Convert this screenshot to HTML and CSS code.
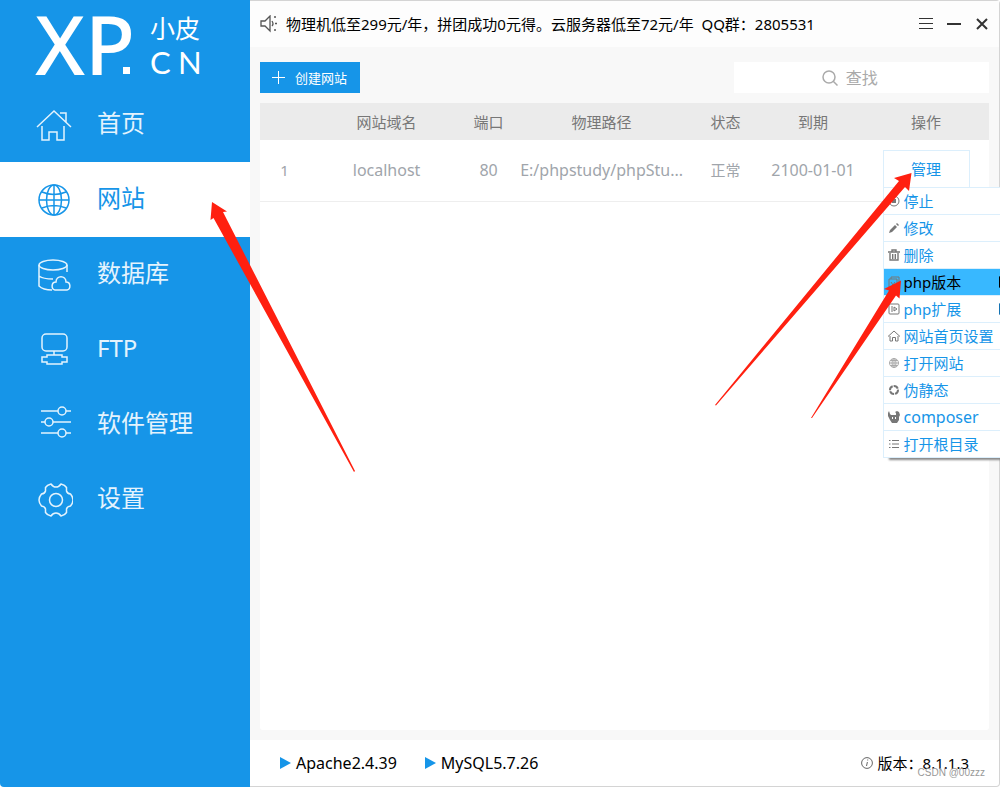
FILE: index.html
```html
<!DOCTYPE html>
<html lang="zh-CN">
<head>
<meta charset="utf-8">
<title>小皮 XP.CN</title>
<link rel="stylesheet" href="styles.css">
</head>
<body>
<div class="app">
  <aside class="sidebar">
    <svg class="logo" viewBox="0 0 250 87" role="img" aria-label="XP.CN 小皮">
      <text class="logo-main" x="35" y="75">XP</text>
      <rect x="123" y="67" width="7" height="7"/>
      <text class="logo-cn" x="150" y="38">小皮</text>
      <text class="logo-latin" x="150 178" y="74">CN</text>
    </svg>
    <nav class="nav">
      <a class="nav-item" href="#home">
        <svg class="nav-icon" viewBox="0 0 38 38"><path d="M2 21 19 5 36 21M7 20v14h7v-8h8v8h7V20M25 7h6v9"/></svg>
        <span>首页</span>
      </a>
      <a class="nav-item active" href="#sites" aria-current="page">
        <svg class="nav-icon" viewBox="0 0 38 38"><circle cx="19" cy="19" r="15"/><ellipse cx="19" cy="19" rx="7.500" ry="15"/><path d="M19 4v30M4 19h30M7 11q12 5 24 0M7 27q12-5 24 0"/></svg>
        <span>网站</span>
      </a>
      <a class="nav-item" href="#db">
        <svg class="nav-icon" viewBox="0 0 38 38"><ellipse cx="18" cy="9" rx="14" ry="5"/><path d="M4 9v21c3 3 8 4 13 4M32 9v7M4 20c4 3 9 3 14 3M20 34c-4-1-4-8 1-8 0-7 10-7 10 0 5 0 5 7 1 8z"/></svg>
        <span>数据库</span>
      </a>
      <a class="nav-item" href="#ftp">
        <svg class="nav-icon" viewBox="0 0 38 38"><rect x="7" y="3" width="25" height="17" rx="4"/><path d="M19 20v4M12 24h15v2h5v5h-5v2H12v-2H7v-5h5z"/></svg>
        <span>FTP</span>
      </a>
      <a class="nav-item" href="#software">
        <svg class="nav-icon" viewBox="0 0 38 38"><path d="M6 5h17M31 5h5M6 16h4M18 16h18M6 27h17M31 27h5"/><circle cx="27" cy="5" r="4"/><circle cx="14" cy="16" r="4"/><circle cx="27" cy="27" r="4"/></svg>
        <span>软件管理</span>
      </a>
      <a class="nav-item" href="#settings">
        <svg class="nav-icon" viewBox="0 0 38 38"><circle cx="21" cy="19" r="6.500"/><path d="M16 3Q12 4 10.500 6.500V10Q10 12.500 6.500 13Q4 16 4 19Q4 22 6.500 25Q10 25.500 10.500 28V31.500Q12 34 16 35Q18 32 21 32Q24 32 26 35Q30 34 31.500 31.500V28Q32 25.500 35.500 25Q38 22 38 19Q38 16 35.500 13Q32 12.500 31.500 10V6.500Q30 4 26 3Q24 6 21 6Q18 6 16 3Z"/></svg>
        <span>设置</span>
      </a>
    </nav>
  </aside>

  <div class="main">
    <header class="topbar">
      <svg class="speaker" viewBox="0 0 17 18"><path d="M1 6h4l5-5v15l-5-5H1z"/><path d="M12 6q2 3 0 5"/><path d="M14 2h2M15 8.500h2M14 15h2"/></svg>
      <p class="notice">物理机低至299元/年，拼团成功0元得。云服务器低至72元/年&nbsp; QQ群：2805531</p>
      <div class="window-controls">
        <button type="button" aria-label="菜单"><svg viewBox="0 0 14 14"><path class="thin" d="M0 1.500h14M0 6.500h14M0 11.500h14"/></svg></button>
        <button type="button" aria-label="最小化"><svg viewBox="0 0 14 14"><path d="M0 7h14"/></svg></button>
        <button type="button" aria-label="关闭"><svg viewBox="0 0 14 14"><path d="M2 2l10 10M12 2 2 12"/></svg></button>
      </div>
    </header>

    <main class="content">
      <div class="toolbar">
        <button class="create" type="button">
          <svg viewBox="0 0 13 13"><path d="M6.500 0v13M0 6.500h13"/></svg>
          <span>创建网站</span>
        </button>
        <label class="search">
          <svg viewBox="0 0 16 16"><circle cx="7" cy="7" r="6"/><path d="m11 11 4.500 4.500"/></svg>
          <input type="search" placeholder="查找" aria-label="查找">
        </label>
      </div>
      <div class="panel">
        <table class="sites">
          <colgroup><col class="c-7"><col class="c-21"><col class="c-7"><col class="c-24"><col class="c-10"><col class="c-14"><col class="c-17"></colgroup>
          <thead>
            <tr><th></th><th>网站域名</th><th>端口</th><th>物理路径</th><th>状态</th><th>到期</th><th>操作</th></tr>
          </thead>
          <tbody>
            <tr>
              <td>1</td><td class="latin">localhost</td><td class="latin">80</td><td class="latin">E:/phpstudy/phpStu...</td><td>正常</td><td class="latin">2100-01-01</td>
              <td>
                <div class="manage">
                  <button class="manage-button" type="button" aria-expanded="true">管理</button>
                  <ul class="menu">
                    <li><button type="button"><svg viewBox="0 0 12 12"><circle cx="6" cy="6" r="5"/><path class="solid" d="M4 4h4v4H4z"/></svg>停止</button></li>
                    <li><button type="button"><svg viewBox="0 0 12 12"><path class="solid" d="m1 11 1-3 5-5 2 2-5 5zM8 2l1-1 2 2-1 1z"/></svg>修改</button></li>
                    <li><button type="button"><svg viewBox="0 0 12 12"><path class="bold" d="M0 3h12M4 3V1h4v2M2 4v7h8V4M4.700 5v5M7.300 5v5"/></svg>删除</button></li>
                    <li><button class="selected" type="button"><svg viewBox="0 0 12 12"><path d="M1 3h8v8H1zM3 3V1h8v8H9M3 6l2 3 2-3"/></svg>php版本<svg class="more" viewBox="0 0 8 12"><path class="solid" d="M0 0l8 6-8 6z"/></svg></button></li>
                    <li><button type="button"><svg viewBox="0 0 12 12"><rect x="1" y="1" width="10" height="10" rx="1"/><path d="M4 3v6M6 4v4l3-2z"/></svg>php扩展<svg class="more" viewBox="0 0 8 12"><path class="solid" d="M0 0l8 6-8 6z"/></svg></button></li>
                    <li><button type="button"><svg viewBox="0 0 12 12"><path d="M0 6.500 6 1l6 5.500M2 6v5h2.500V7.500h3V11H10V6"/></svg>网站首页设置</button></li>
                    <li><button type="button"><svg class="pale" viewBox="0 0 12 12"><circle cx="6" cy="6" r="4.500"/><ellipse cx="6" cy="6" rx="2" ry="4.500"/><path d="M6 1.500v9M1.500 6h9M2.500 3.500h7M2.500 8.500h7"/></svg>打开网站</button></li>
                    <li><button type="button"><svg viewBox="0 0 12 12"><circle class="ring" cx="6" cy="6" r="4"/></svg>伪静态</button></li>
                    <li><button class="latin" type="button"><svg viewBox="0 0 12 12"><path class="solid" d="M1 0l1 3 1 1h5V2L7 1l2-1 2 1 1 3-1 2v3l-2 3H4L2 9 0 5V2z"/><path class="eye" d="M4.500 6v2M7.500 6v2"/></svg>composer</button></li>
                    <li><button type="button"><svg viewBox="0 0 12 12"><path d="M1 2.500h1.500M4 2.500h7M1 6h1.500M4 6h7M1 9.500h1.500M4 9.500h7"/></svg>打开根目录</button></li>
                  </ul>
                </div>
              </td>
            </tr>
          </tbody>
        </table>
      </div>
    </main>

    <footer class="statusbar">
      <span class="service latin"><svg viewBox="0 0 11 12"><path d="M0 0l11 6-11 6z"/></svg>Apache2.4.39</span>
      <span class="service latin"><svg viewBox="0 0 11 12"><path d="M0 0l11 6-11 6z"/></svg>MySQL5.7.26</span>
      <span class="version"><svg viewBox="0 0 12 12"><circle cx="6" cy="6" r="5.400"/><path d="M6.700 2.500v1M6.400 5 5.500 9"/></svg>版本：8.1.1.3</span>
    </footer>
  </div>

  <svg class="arrows" viewBox="0 0 1000 787" aria-hidden="true">
    <path d="M212 202 227 211.500 223 212 355 471 354 472 213.500 218 210.500 220z"/>
    <path d="M911.500 173 909 191 905 187 716 405.500 715 405 899 181 894 178z"/>
    <path d="M901 280.500 899.500 298.500 896 295.500 812 418 811 418 889 290.500 884 289z"/>
  </svg>
  <div class="watermark">CSDN @00zzz</div>
</div>
</body>
</html>
```
FILE: styles.css
```css
* { box-sizing: border-box; }

body {
  margin: 0;
  overflow: hidden;
  font: 15px/20px "Noto Sans", "Noto Sans CJK SC", sans-serif;
  color: #000;
}

button, input { font: inherit; }

button {
  padding: 0;
  border: 0;
  background: none;
  cursor: pointer;
}

svg {
  flex: none;
  fill: none;
  stroke: currentColor;
}

.latin { font-size: 16px; }

.app {
  position: relative;
  display: flex;
  min-height: 100vh;
  background: #fff;
}

/* Sidebar */
.sidebar {
  flex: none;
  width: 250px;
  background: #1695e8;
  border-bottom-left-radius: 4px;
  color: #fff;
}

.logo {
  display: block;
  width: 250px;
  height: 87px;
  fill: #fff;
  stroke: none;
}

.logo-main { font-size: 82px; font-weight: 500; }
.logo-cn { font-size: 25px; }
.logo-latin { font: 31px Lato, sans-serif; }

.nav-item {
  display: flex;
  align-items: center;
  gap: 24px;
  height: 75px;
  padding-left: 35px;
  color: #e4f3fd;
  font-size: 24px;
  line-height: 32px;
  text-decoration: none;
}

.nav-item span { padding-bottom: 3px; }
.nav-item.active { background: #fff; color: #1695e8; }
.nav-icon { width: 38px; height: 38px; stroke-width: 1.5; }

/* Main window */
.main {
  flex: 1;
  min-width: 0;
  display: flex;
  flex-direction: column;
  border: 1px solid #d4d4d4;
  border-left: 0;
  border-radius: 0 4px 4px 0;
  background: #f8f8f8;
}

.topbar {
  display: flex;
  align-items: center;
  gap: 9px;
  height: 46px;
  padding: 0 10px;
  background: #fdfdfd;
}

.speaker { width: 17px; height: 18px; color: #555; stroke-width: 1.3; }
.notice { flex: 1; margin: 0; white-space: nowrap; }
.window-controls { display: flex; gap: 14px; color: #333; }
.window-controls button { display: block; height: 14px; color: inherit; }
.window-controls svg { display: block; width: 14px; height: 14px; stroke-width: 2; }
.window-controls .thin { stroke-width: 1; }

.content {
  flex: 1;
  display: flex;
  flex-direction: column;
  gap: 10px;
  padding: 15px 10px 10px;
}

.toolbar { display: flex; justify-content: space-between; }

.create {
  display: flex;
  align-items: center;
  gap: 10px;
  width: 100px;
  height: 31px;
  padding-left: 12px;
  background: #1695e8;
  color: #fff;
  font-size: 13px;
}

.create svg { width: 13px; height: 13px; }

.search {
  display: flex;
  align-items: center;
  gap: 8px;
  width: 35%;
  height: 31px;
  padding-left: 88px;
  background: #fff;
  color: #aaa;
  font-size: 16px;
}

.search svg { width: 16px; height: 16px; stroke-width: 1.5; }

.search input {
  flex: 1;
  min-width: 0;
  padding: 0;
  border: 0;
  outline: 0;
  background: none;
}

.search input::placeholder { color: #aaa; }

.panel { flex: 1; background: #fff; border-radius: 0 0 3px 3px; }

.sites {
  width: 100%;
  table-layout: fixed;
  border-collapse: collapse;
  text-align: center;
  white-space: nowrap;
}

.c-7 { width: 7%; }
.c-10 { width: 10%; }
.c-14 { width: 14%; }
.c-17 { width: 17%; }
.c-21 { width: 21%; }
.c-24 { width: 24%; }

.sites th {
  height: 37px;
  padding: 0 2px 0 0;
  background: #ebebeb;
  color: #777;
  font-weight: 400;
}

.sites td {
  height: 61px;
  padding: 0 2px 0 0;
  border-bottom: 1px solid #eee;
  color: #a0a5ab;
}

.manage {
  position: relative;
  width: 87px;
  margin: 0 auto 3px;
}

.manage-button {
  width: 87px;
  height: 38px;
  border: 1px solid #dceffc;
  background: #fff;
  color: #1695e8;
}

.menu {
  position: absolute;
  top: 37px;
  left: 0;
  width: 128px;
  margin: 0;
  padding: 0;
  list-style: none;
  border: 1px solid #dceffc;
  background: #fff;
  box-shadow: 5px 3px 2px -1px #888;
}

.menu li + li { border-top: 1px solid #dceffc; }

.menu button {
  display: flex;
  align-items: center;
  gap: 4px;
  width: 100%;
  height: 26px;
  padding: 0 3px 0 4px;
  color: #1695e8;
}

.menu svg { width: 12px; height: 12px; color: #777; }
.menu .solid { fill: currentColor; stroke: none; }
.menu .bold { stroke-width: 1.4; }
.menu .pale { color: #aaa; }
.menu .ring { stroke-width: 2; stroke-dasharray: 5 1; }
.menu .eye { stroke: #fff; }
.menu .more { width: 8px; margin-left: auto; color: #1473b3; }
.menu .selected { background: #38b8ff; color: #000; }
.menu .selected .more { color: #000; }

/* Status bar */
.statusbar {
  display: flex;
  align-items: center;
  gap: 28px;
  height: 46px;
  padding: 0 30px;
  background: #fff;
  border-bottom-right-radius: 4px;
}

.service, .version { display: flex; align-items: center; gap: 5px; }
.service svg { width: 11px; height: 12px; fill: #1695e8; stroke: none; }
.version { margin-left: auto; }
.version svg { width: 12px; height: 12px; color: #666; }

/* Overlays */
.arrows {
  position: absolute;
  top: 0;
  left: 0;
  width: 1000px;
  height: 787px;
  fill: #ff2010;
  stroke: none;
  pointer-events: none;
}

.watermark {
  position: absolute;
  right: 15px;
  bottom: 6px;
  color: #999;
  font: 10px/16px "Liberation Sans", sans-serif;
}
```
